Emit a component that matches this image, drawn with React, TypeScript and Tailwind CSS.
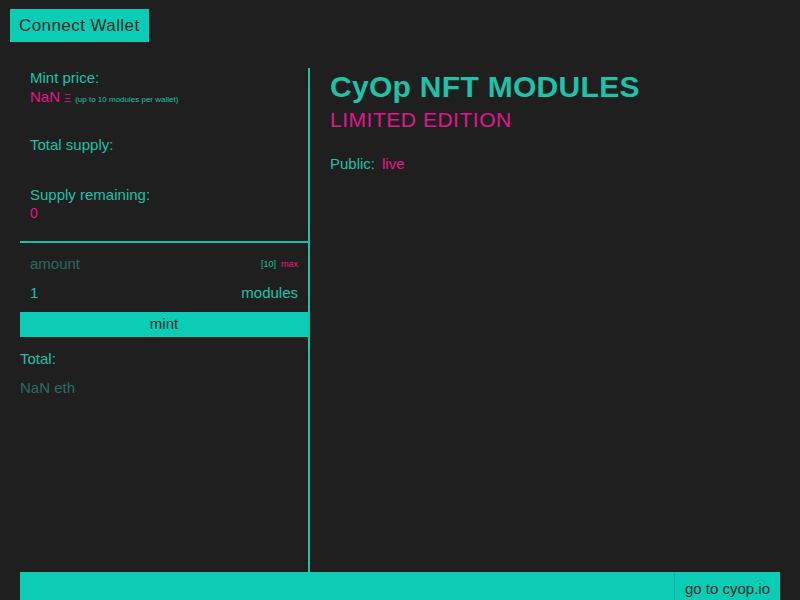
const App: React.FC = () => {
  return (
    <div className="h-screen bg-[#1f1f1f] flex flex-col font-['Liberation_Sans',sans-serif] overflow-hidden">
      {/* Header */}
      <div className="pt-[9px] pl-[10px]">
        <button className="bg-[#0bcdb5] text-[#1f2a28] text-[17px] h-[33px] px-[9px] tracking-wide">
          Connect Wallet
        </button>
      </div>

      {/* Main */}
      <div className="flex flex-1 mt-[26px] px-[20px]">
        {/* Left column */}
        <div className="w-[290px] border-r-2 border-[#19bfa6] flex flex-col">
          <div className="px-[10px] border-b-2 border-[#19bfa6] h-[175px]">
            <p className="text-[#1ec2a8] text-[15px] leading-[18px] pt-[1px]">Mint price:</p>
            <p className="flex items-baseline gap-[4px] mt-[1px] leading-[18px]">
              <span className="text-[#e3168d] text-[15px]">NaN</span>
              <span className="text-[#e3168d] text-[11px]">Ξ</span>
              <span className="text-[#1ec2a8] text-[8px]">(up to 10 modules per wallet)</span>
            </p>
            <p className="text-[#1ec2a8] text-[15px] leading-[18px] mt-[27px]">Total supply:</p>
            <p className="text-[#1ec2a8] text-[15px] leading-[18px] mt-[32px]">Supply remaining:</p>
            <p className="text-[#e3168d] text-[14px] leading-[18px]">0</p>
          </div>

          <div className="px-[10px] pt-[10px] flex justify-between items-center">
            <span className="text-[#2b6b62] text-[15px]">amount</span>
            <span className="text-[9px] flex gap-[5px]">
              <span className="text-[#1ec2a8]">[10]</span>
              <span className="text-[#e3168d]">max</span>
            </span>
          </div>
          <div className="px-[10px] mt-[6px] flex justify-between items-center text-[#1ec2a8] text-[15px]">
            <span>1</span>
            <span>modules</span>
          </div>
          <button className="bg-[#0bcdb5] text-[#1f2a28] text-[15px] h-[25px] mt-[8px] w-full">mint</button>
          <p className="text-[#1ec2a8] text-[15px] mt-[11px]">Total:</p>
          <p className="text-[#2b6b62] text-[15px] mt-[6px]">NaN eth</p>
        </div>

        {/* Right column */}
        <div className="flex-1 pl-[20px]">
          <h1 className="text-[#1ec2a8] text-[30px] font-bold leading-[36px] pt-[1px] tracking-[0.01em]">CyOp NFT MODULES</h1>
          <h2 className="text-[#e3168d] text-[21px] leading-[26px] mt-[2px] tracking-wide">LIMITED EDITION</h2>
          <p className="mt-[20px] text-[15px] flex gap-[7px]">
            <span className="text-[#1ec2a8]">Public:</span>
            <span className="text-[#e3168d]">live</span>
          </p>
        </div>
      </div>

      {/* Footer */}
      <div className="mx-[20px] h-[28px] bg-[#0bcdb5] flex justify-end">
        <a className="border-l border-[#0ab8a2] px-[10px] pt-[7px] text-[#1f2a28] text-[15px] leading-[20px]">go to cyop.io</a>
      </div>
    </div>
  );
};

export default App;
